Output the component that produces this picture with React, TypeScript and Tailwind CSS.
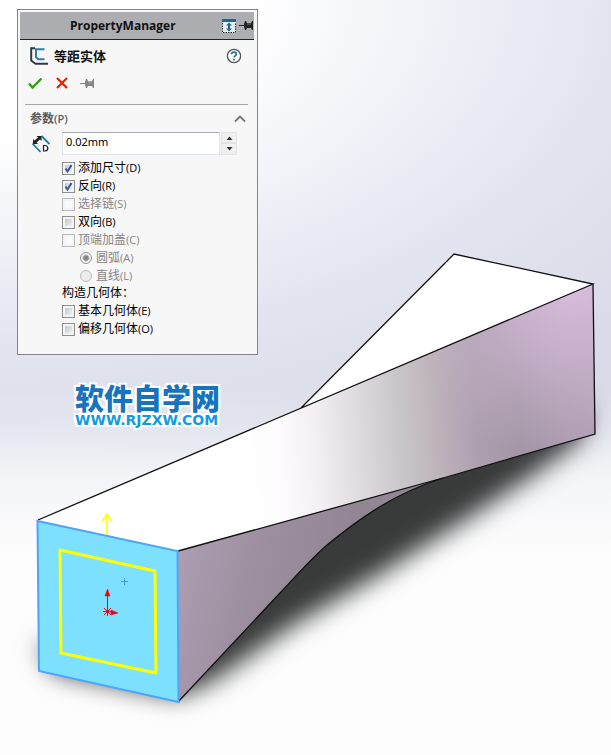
import { useState } from 'react'

type Option = {
  id: string
  label: string
  hotkey: string
  checked?: boolean
  disabled?: boolean
}

const sketchOptions: Option[] = [
  { id: 'add-dim', label: '添加尺寸', hotkey: '(D)', checked: true },
  { id: 'reverse', label: '反向', hotkey: '(R)', checked: true },
  { id: 'chain', label: '选择链', hotkey: '(S)', disabled: true },
  { id: 'both', label: '双向', hotkey: '(B)' },
  { id: 'cap', label: '顶端加盖', hotkey: '(C)', disabled: true },
]

const capOptions: Option[] = [
  { id: 'arc', label: '圆弧', hotkey: '(A)', checked: true },
  { id: 'line', label: '直线', hotkey: '(L)' },
]

const geometryOptions: Option[] = [
  { id: 'base', label: '基本几何体', hotkey: '(E)' },
  { id: 'offset', label: '偏移几何体', hotkey: '(O)' },
]

function PinIcon({ className }: { className: string }) {
  return (
    <svg viewBox="0 0 15 11" className={className} aria-hidden="true">
      <path d="M0 5h5V4l1-3h1l1 2h4l1-2h1v9h-1l-1-2H8l-1 2H6L5 7V6H0z" fill="currentColor" />
      <path d="M8 4h4" stroke="#fff" strokeOpacity="0.4" />
    </svg>
  )
}

function CheckOption({ option }: { option: Option }) {
  const [checked, setChecked] = useState(!!option.checked)
  return (
    <label
      htmlFor={option.id}
      className={`flex h-[18px] items-center gap-[3px] ${option.disabled ? 'text-[#858585]' : 'text-black'}`}
    >
      <span className="relative size-[13px]">
        <input
          id={option.id}
          type="checkbox"
          checked={checked}
          disabled={option.disabled}
          onChange={() => setChecked(!checked)}
          className="block size-[13px] appearance-none border border-[#8e8f8f] bg-linear-to-br from-[#b9bfc8] to-[#fafafa] shadow-[inset_0_0_0_2px_#f4f4f4] disabled:border-[#b8b8b8] disabled:from-[#f7f7f7]"
        />
        {checked && (
          <svg viewBox="0 0 13 13" className="pointer-events-none absolute inset-0" aria-hidden="true">
            <path d="M3.5 6.5l2 3L9.5 3" fill="none" stroke="#3f5396" strokeWidth="2" />
          </svg>
        )}
      </span>
      <span className="whitespace-nowrap">
        {option.label}
        <span className="text-[11px]">{option.hotkey}</span>
      </span>
    </label>
  )
}

function PropertyPanel() {
  const [distance, setDistance] = useState('0.02mm')
  return (
    <section className="w-[241px] border border-[#858585] bg-[#f7f7f7] p-[2px] pb-4 text-[12px] leading-[18px]">
      <header className="mr-[1px] flex h-7 items-center border-b border-[#222] bg-[#adaeb2]">
        <h1 className="flex-1 pl-[50px] font-['Open_Sans'] text-[12px] font-bold text-[#111]">PropertyManager</h1>
        <button type="button" aria-label="Resize" className="mr-[3px]">
          <svg viewBox="0 0 14 14" className="size-3.5" aria-hidden="true">
            <rect width="14" height="14" fill="#e9edf0" />
            <path d="M.5 4v9.5h13V4" fill="none" stroke="#222" strokeDasharray="1.5 1" />
            <rect width="14" height="3" fill="#1f6a8c" />
            <path d="M7 3.5l3 3H8v3h2l-3 3-3-3h2v-3H4z" fill="#1f6a8c" />
          </svg>
        </button>
        <button type="button" aria-label="Pin panel">
          <PinIcon className="h-[11px] w-[15px] text-[#222]" />
        </button>
      </header>

      <div className="flex h-8 items-center pr-[13px] pl-2.5">
        <svg viewBox="0 0 18 18" className="size-[18px]" aria-hidden="true">
          <path d="M18 16.800H5.500L1.200 13.500V1.200H5" fill="none" stroke="#30383e" strokeWidth="2" />
          <path d="M14.500 2.200H6v8l2 2h6.500" fill="none" stroke="#2f7fa3" strokeWidth="2" />
        </svg>
        <h2 className="ml-1.5 flex-1 text-[13px] font-bold text-[#111]">等距实体</h2>
        <button type="button" aria-label="Help">
          <svg viewBox="0 0 16 16" className="size-4" aria-hidden="true">
            <circle cx="8" cy="8" r="6.6" fill="#fff" stroke="#4d555b" strokeWidth="1.3" />
            <path d="M5.6 6.3C5.6 3.4 10.3 3.5 10.3 6.2 10.3 7.9 8 7.9 8 9.6M8 10.8v1.7" fill="none" stroke="#226f98" strokeWidth="1.7" />
          </svg>
        </button>
      </div>

      <div className="flex h-[22px] items-center gap-3 pl-2">
        <button type="button" aria-label="OK">
          <svg viewBox="0 0 15 12" className="h-3 w-[15px]" aria-hidden="true">
            <path d="M1 6.500l3.500 4L13.500 1.500" fill="none" stroke="#2f9e0f" strokeWidth="2.4" />
          </svg>
        </button>
        <button type="button" aria-label="Cancel" className="ml-[1px]">
          <svg viewBox="0 0 12 12" className="size-3" aria-hidden="true">
            <path d="M1 1l10 10M11 1L1 11" stroke="#e02200" strokeWidth="2.2" />
          </svg>
        </button>
        <button type="button" aria-label="Keep visible">
          <PinIcon className="h-[11px] w-[15px] text-[#858585]" />
        </button>
      </div>

      <div className="mt-[10px] mr-[7px] ml-[5px] border-t border-[#a8a8a8]">
        <h3 className="mt-1 flex h-5 items-center justify-between pr-[2px] pl-[5px] font-bold text-[#5a5a5a]">
          <span>
            参数<span className="text-[11px] font-semibold">(P)</span>
          </span>
          <button type="button" aria-label="Collapse">
            <svg viewBox="0 0 12 8" className="h-2 w-3" aria-hidden="true">
              <path d="M1 6.5l5-5 5 5" fill="none" stroke="#757575" strokeWidth="1.8" />
            </svg>
          </button>
        </h3>
      </div>

      <div className="mt-[3px] flex items-center pl-3">
        <svg viewBox="0 0 18 18" className="mr-3 size-[18px]" aria-hidden="true">
          <path d="M0.500 8.500l8 8.500M9.500 1l8 8" stroke="#23769b" strokeWidth="1.800" />
          <path d="M1 4v5h5L4.500 7.500 8 4.500 9.500 6V1H4.500L6 2.500 2.500 5.500z" fill="#222" />
          <path d="M11.500 10.500v5.500h1.500q2.800-.2 2.800-2.800t-2.800-2.700z" fill="none" stroke="#222" strokeWidth="1.200" />
        </svg>
        <input
          type="text"
          aria-label="等距距离"
          value={distance}
          onChange={(e) => setDistance(e.target.value)}
          className="h-[23px] w-[158px] border border-[#dfe3ea] border-t-[#a9abb2] bg-white px-[3px] pb-1 font-['Noto_Sans'] text-[11px] text-black"
        />
        <div className="ml-[1px] flex flex-col">
          <button type="button" aria-label="Increase" className="flex h-[11px] w-4 items-center justify-center border border-[#e4e4e4] bg-[#f0f0f0]">
            <svg viewBox="0 0 7 4" className="h-1 w-[7px]" aria-hidden="true">
              <path d="M0.500 4l3-3.500 3 3.500z" fill="#333" />
            </svg>
          </button>
          <button type="button" aria-label="Decrease" className="flex h-3 w-4 items-center justify-center border border-[#e4e4e4] bg-[#f0f0f0]">
            <svg viewBox="0 0 7 4" className="h-1 w-[7px]" aria-hidden="true">
              <path d="M0.500 0l3 3.500 3-3.500z" fill="#333" />
            </svg>
          </button>
        </div>
      </div>

      <div className="mt-1 pl-[42px]">
        {sketchOptions.map((option) => (
          <CheckOption key={option.id} option={option} />
        ))}
        <div className="pl-[18px]">
          {capOptions.map((option) => (
            <label key={option.id} htmlFor={option.id} className="flex h-[18px] items-center gap-1 text-[#858585]">
              <input
                id={option.id}
                type="radio"
                name="cap"
                disabled
                defaultChecked={option.checked}
                className="size-3 appearance-none rounded-full border border-[#bcbcbc] bg-[#ececec] checked:border-[#999] checked:bg-radial checked:from-[#888] checked:from-30% checked:to-[#f2f2f2] checked:to-55%"
              />
              <span>
                {option.label}
                <span className="text-[11px]">{option.hotkey}</span>
              </span>
            </label>
          ))}
        </div>
        <p className="h-[17px] leading-[15px] text-black">构造几何体：</p>
        {geometryOptions.map((option) => (
          <CheckOption key={option.id} option={option} />
        ))}
      </div>
    </section>
  )
}

function Model() {
  return (
    <svg
      viewBox="0 0 611 755"
      preserveAspectRatio="xMinYMin meet"
      className="absolute inset-0 h-full w-full"
      aria-hidden="true"
    >
      <defs>
        <filter id="soft" x="-20%" y="-20%" width="140%" height="140%" colorInterpolationFilters="sRGB">
          <feGaussianBlur stdDeviation="12" />
        </filter>
        <linearGradient id="twist" gradientUnits="userSpaceOnUse" x1="245" y1="446" x2="595" y2="424">
          <stop offset="0" stopColor="#ffffff" />
          <stop offset="0.1" stopColor="#fdfbfd" />
          <stop offset="0.2" stopColor="#f4eff3" />
          <stop offset="0.33" stopColor="#ddd9dd" />
          <stop offset="0.45" stopColor="#c8c5c8" />
          <stop offset="0.55" stopColor="#bdb3ba" />
          <stop offset="0.66" stopColor="#ae9fb0" />
          <stop offset="0.79" stopColor="#a294a5" />
          <stop offset="1" stopColor="#ae9ab1" />
        </linearGradient>
        <radialGradient id="pink" gradientUnits="userSpaceOnUse" cx="575" cy="285" r="180">
          <stop offset="0" stopColor="#d9bddd" />
          <stop offset="0.4" stopColor="#cab3ce" stopOpacity="0.85" />
          <stop offset="1" stopColor="#c4b4c6" stopOpacity="0" />
        </radialGradient>
        <linearGradient id="under" gradientUnits="userSpaceOnUse" x1="175" y1="570" x2="330" y2="610">
          <stop offset="0" stopColor="#ae9db1" />
          <stop offset="0.5" stopColor="#9c8e9f" />
          <stop offset="1" stopColor="#928694" />
        </linearGradient>
      </defs>

      {/* ground shadow */}
      <path
        d="M38 645L54 672L178 697L212 682L296 624L378 576L464 521L532 476L582 438L588 405L430 430L270 540L150 640Z"
        fill="#393b3b"
        filter="url(#soft)"
      />

      {/* solid body */}
      <path d="M301 408L454 254L593 284Z" fill="#fff" />
      <path d="M38 520L301 408L593 284L595 434L440 479L178 551Z" fill="url(#twist)" />
      <path d="M301 408L593 284L595 434L440 479Z" fill="url(#pink)" />
      <path d="M178 551L443 478C395 493 360 518 327 545C310 560 297 575 280 593L178 702Z" fill="url(#under)" />
      <g fill="none" stroke="#111" strokeWidth="1.3">
        <path d="M38 520L593 284L454 254L301 408" />
        <path d="M593 284L595 434L443 478L178 551" />
        <path d="M443 478C395 493 360 518 327 545C310 560 297 575 280 593L178 702" />
      </g>

      {/* selected face and its offset sketch */}
      <path d="M37.500 521L177.500 551L178.500 702L39 671Z" fill="#7de0ff" stroke="#4fa3fb" strokeWidth="2" />
      <path d="M60 550L155 571L156 673L61 653Z" fill="none" stroke="#ff0" strokeWidth="3" strokeLinejoin="round" />
      <path d="M107 535V515M102.500 521L107 514L111.500 521" fill="none" stroke="#ff0" strokeWidth="1.600" />
      <path d="M121 581.500h7M124.500 578v7" stroke="#4b93e8" />
      <g fill="#f00014" stroke="#f00014">
        <path d="M107.500 611V594" />
        <path d="M107.500 589L110 596H105Z" strokeWidth="0.500" />
        <path d="M111 610L118 613L111 615Z" strokeWidth="0.500" />
        <path d="M103 611.500h9M107.500 607v9M104 608l7 7M111 608l-7 7" fill="none" />
      </g>
    </svg>
  )
}

export default function App() {
  return (
    <main
      lang="zh-CN"
      className="relative min-h-screen bg-[linear-gradient(to_bottom,#ffffff00_51%,#ffffff33_56%,#ffffffb3_63%,#fdfdfd_74%),radial-gradient(ellipse_120%_54%_at_0%_0%,#ffffff_33%,#f4f5fa_53%,#e3e6f0_82%,#d9dce8_115%)] font-['Open_Sans','Noto_Sans_CJK_SC',sans-serif]"
    >
      <Model />
      <div className="relative flex flex-col items-start pt-[9px] pl-[17px]">
        <PropertyPanel />
        <div className="mt-7 ml-[58px] [text-shadow:1px_0_1px_#fff,-1px_0_1px_#fff,0_1px_1px_#fff,0_-1px_1px_#fff,2px_2px_1px_#fff,-2px_-2px_1px_#fff,2px_-2px_1px_#fff,-2px_2px_1px_#fff]">
          <p className="text-[29px] leading-8 font-black text-[#1673bd]">软件自学网</p>
          <p className="font-['DejaVu_Sans'] text-[14px] leading-[10px] font-bold text-[#139be0]">WWW.RJZXW.COM</p>
        </div>
      </div>
    </main>
  )
}
